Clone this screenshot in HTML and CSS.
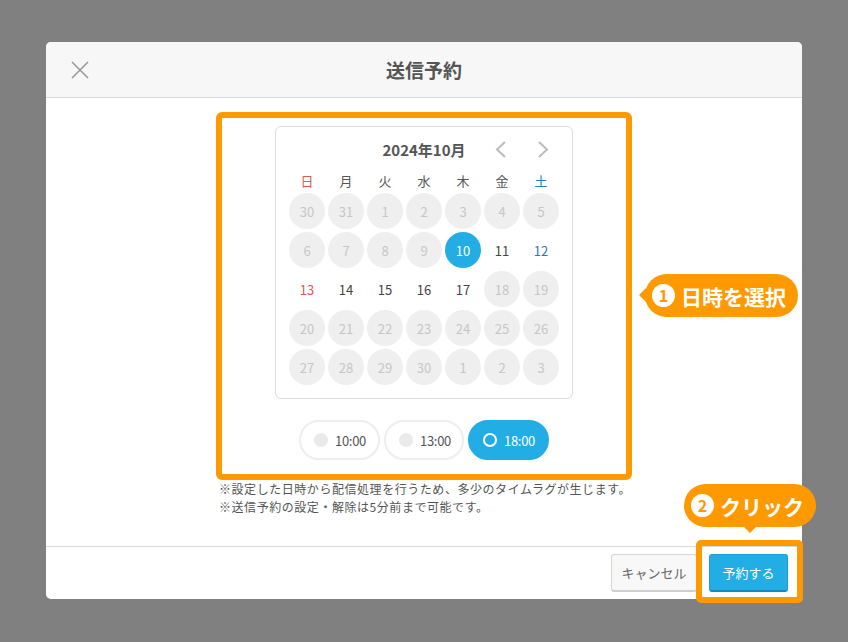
FILE: index.html
```html
<!DOCTYPE html>
<html lang="ja">
<head>
    <meta charset="UTF-8">
    <meta name="viewport" content="width=device-width, initial-scale=1.0">
    <title>送信予約</title>
    <link rel="stylesheet" href="styles.css">
</head>
<body>
    <div class="modal">
        <header class="modal-header">
            <button class="close-btn" aria-label="閉じる">
                <svg width="18" height="18" viewBox="0 0 18 18"><path d="M1 1 L17 17 M17 1 L1 17" stroke="#999" stroke-width="1.6" fill="none"/></svg>
            </button>
            <h1>送信予約</h1>
            <span></span>
        </header>

        <div class="modal-body">
            <div class="highlight">
                <div class="calendar">
                    <div class="cal-head">
                        <span></span>
                        <div class="cal-title">2024年10月</div>
                        <div class="cal-nav">
                            <button class="nav-btn" aria-label="前の月">
                                <svg width="12" height="17" viewBox="0 0 12 17"><path d="M10 1 L2 8.5 L10 16" stroke="#bbb" stroke-width="2" fill="none"/></svg>
                            </button>
                            <button class="nav-btn" aria-label="次の月">
                                <svg width="12" height="17" viewBox="0 0 12 17"><path d="M2 1 L10 8.5 L2 16" stroke="#bbb" stroke-width="2" fill="none"/></svg>
                            </button>
                        </div>
                    </div>
                    <div class="week">
                        <span class="sun">日</span><span>月</span><span>火</span><span>水</span><span>木</span><span>金</span><span class="sat">土</span>
                    </div>
                    <div class="days" id="days"></div>
                </div>

                <div class="times">
                    <button class="time"><span class="dot"></span>10:00</button>
                    <button class="time"><span class="dot"></span>13:00</button>
                    <button class="time selected"><span class="dot"></span>18:00</button>
                </div>
            </div>

            <div class="notes">
                <p>※設定した日時から配信処理を行うため、多少のタイムラグが生じます。</p>
                <p>※送信予約の設定・解除は5分前まで可能です。</p>
            </div>
        </div>

        <footer class="modal-footer">
            <button class="btn btn-cancel">キャンセル</button>
            <button class="btn btn-primary">予約する</button>
        </footer>

        <!-- 操作ガイド -->
        <div class="guide guide-date"><span class="num">1</span>日時を選択</div>
        <div class="guide guide-click"><span class="num">2</span>クリック</div>
        <div class="guide-frame"></div>
    </div>

    <script>
        // 2024年10月のカレンダー (前後の月も含めて5週)
        const cells = [
            [30, 'off'], [31, 'off'], [1, 'off'], [2, 'off'], [3, 'off'], [4, 'off'], [5, 'off'],
            [6, 'off'], [7, 'off'], [8, 'off'], [9, 'off'], [10, 'selected'], [11, ''], [12, 'sat'],
            [13, 'sun'], [14, ''], [15, ''], [16, ''], [17, ''], [18, 'off'], [19, 'off'],
            [20, 'off'], [21, 'off'], [22, 'off'], [23, 'off'], [24, 'off'], [25, 'off'], [26, 'off'],
            [27, 'off'], [28, 'off'], [29, 'off'], [30, 'off'], [1, 'off'], [2, 'off'], [3, 'off']
        ];

        const daysEl = document.getElementById('days');
        cells.forEach(([num, type]) => {
            const d = document.createElement('span');
            d.className = 'day' + (type ? ' ' + type : '');
            d.textContent = num;
            daysEl.appendChild(d);
        });
    </script>
</body>
</html>
```

FILE: styles.css
```css
body {
    margin: 0;
    height: 642px;
    background-color: #808080;
    font-family: "Noto Sans CJK JP", "Noto Sans", sans-serif;
    color: #555;
    display: flex;
    align-items: flex-start;
    justify-content: center;
}

button {
    font-family: inherit;
    cursor: pointer;
}

.modal {
    position: relative;
    margin-top: 42px;
    width: 756px;
    height: 557px;
    background: white;
    border-radius: 5px;
    display: flex;
    flex-direction: column;
}

.modal-header {
    height: 55px;
    background-color: #f7f7f7;
    border-bottom: 1px solid #d8d8d8;
    border-radius: 5px 5px 0 0;
    display: grid;
    grid-template-columns: 1fr auto 1fr;
    align-items: center;
}

.modal-header h1 {
    margin: 0;
    font-size: 19px;
    font-weight: bold;
    color: #555;
}

.close-btn {
    justify-self: start;
    margin-left: 24px;
    width: 20px;
    height: 20px;
    padding: 0;
    border: none;
    background: none;
    display: flex;
    align-items: center;
    justify-content: center;
}

.modal-body {
    flex: 1;
    padding-top: 14px;
    display: flex;
    flex-direction: column;
    align-items: center;
}

.highlight {
    box-sizing: border-box;
    width: 416px;
    height: 368px;
    border: 6px solid #ff9900;
    border-radius: 6px;
    padding-top: 8px;
    display: flex;
    flex-direction: column;
    align-items: center;
}

/* カレンダー */
.calendar {
    box-sizing: border-box;
    width: 298px;
    height: 273px;
    border: 1px solid #dcdcdc;
    border-radius: 6px;
    padding-bottom: 13px;
}

.cal-head {
    height: 44px;
    display: grid;
    grid-template-columns: 1fr auto 1fr;
    align-items: center;
}

.cal-title {
    font-size: 15px;
    font-weight: bold;
    color: #555;
}

.cal-nav {
    justify-self: end;
    margin-right: 17px;
    display: flex;
    gap: 18px;
}

.nav-btn {
    width: 24px;
    height: 24px;
    padding: 0;
    border: none;
    background: none;
    display: flex;
    align-items: center;
    justify-content: center;
}

.week,
.days {
    display: grid;
    grid-template-columns: repeat(7, 36px);
    column-gap: 3px;
    justify-content: center;
}

.week {
    height: 20px;
    margin-bottom: 2px;
    font-size: 13px;
    line-height: 20px;
    text-align: center;
    color: #555;
}

.days {
    row-gap: 3px;
}

.sun {
    color: #e8554e;
}

.sat {
    color: #2a7bb5;
}

.day {
    width: 36px;
    height: 36px;
    border-radius: 50%;
    display: flex;
    align-items: center;
    justify-content: center;
    font-size: 13px;
    color: #444;
}

.day.off {
    background-color: #efefef;
    color: #c6c6c6;
}

.day.selected {
    background-color: #22ade4;
    color: white;
}

.day.sun {
    color: #e8554e;
}

.day.sat {
    color: #2a7bb5;
}

/* 時間選択 */
.times {
    margin-top: 21px;
    display: flex;
    gap: 4px;
}

.time {
    box-sizing: border-box;
    width: 81px;
    height: 40px;
    padding: 0 0 0 13px;
    border: 2px solid #eeeeee;
    border-radius: 20px;
    background: white;
    display: flex;
    align-items: center;
    gap: 7px;
    font-size: 13px;
    letter-spacing: -0.3px;
    color: #555;
}

.time:nth-child(2) {
    width: 80px;
}

.dot {
    flex: none;
    width: 14px;
    height: 14px;
    border-radius: 50%;
    background-color: #eaeaea;
}

.time.selected {
    background-color: #22ade4;
    border-color: #22ade4;
    color: white;
}

.time.selected .dot {
    box-sizing: border-box;
    background: none;
    border: 2px solid white;
}

.notes {
    box-sizing: border-box;
    width: 416px;
    padding-left: 3px;
    font-size: 12px;
    letter-spacing: 0.55px;
    line-height: 18px;
    color: #555;
}

.notes p {
    margin: 0;
}

/* フッター */
.modal-footer {
    height: 52px;
    border-top: 1px solid #d8d8d8;
    display: flex;
    justify-content: flex-end;
    align-items: center;
    gap: 12px;
    padding-right: 14px;
}

.btn {
    box-sizing: border-box;
    height: 38px;
    border-radius: 3px;
    font-size: 13px;
}

.btn-cancel {
    width: 86px;
    background-color: #f8f8f8;
    border: 1px solid #d6d6d6;
    border-bottom: 2px solid #cfcfcf;
    color: #666;
}

.btn-primary {
    width: 79px;
    background-color: #22ade4;
    border: 1px solid #1f9fd3;
    border-bottom: 2px solid #1b88b8;
    color: white;
}

/* 操作ガイド (吹き出し) */
.guide {
    position: absolute;
    height: 43px;
    padding: 0 10px 0 7px;
    border-radius: 22px;
    background-color: #ff9900;
    color: white;
    font-size: 21px;
    font-weight: bold;
    display: flex;
    align-items: center;
    gap: 6px;
    box-sizing: border-box;
}

.guide::after {
    content: "";
    position: absolute;
    border: 7px solid transparent;
}

.num {
    width: 23px;
    height: 23px;
    border-radius: 50%;
    background: white;
    color: #ff9900;
    font-size: 16px;
    line-height: 23px;
    text-align: center;
}

.guide-date {
    left: 599px;
    top: 232px;
    width: 153px;
}

.guide-date::after {
    left: -13px;
    top: 14px;
    border-right-color: #ff9900;
}

.guide-click {
    left: 638px;
    top: 442px;
    width: 132px;
}

.guide-click::after {
    left: 59px;
    bottom: -13px;
    border-top-color: #ff9900;
}

.guide-frame {
    position: absolute;
    left: 650px;
    top: 498px;
    width: 107px;
    height: 63px;
    box-sizing: border-box;
    border: 6px solid #ff9900;
    border-radius: 5px;
}
```
